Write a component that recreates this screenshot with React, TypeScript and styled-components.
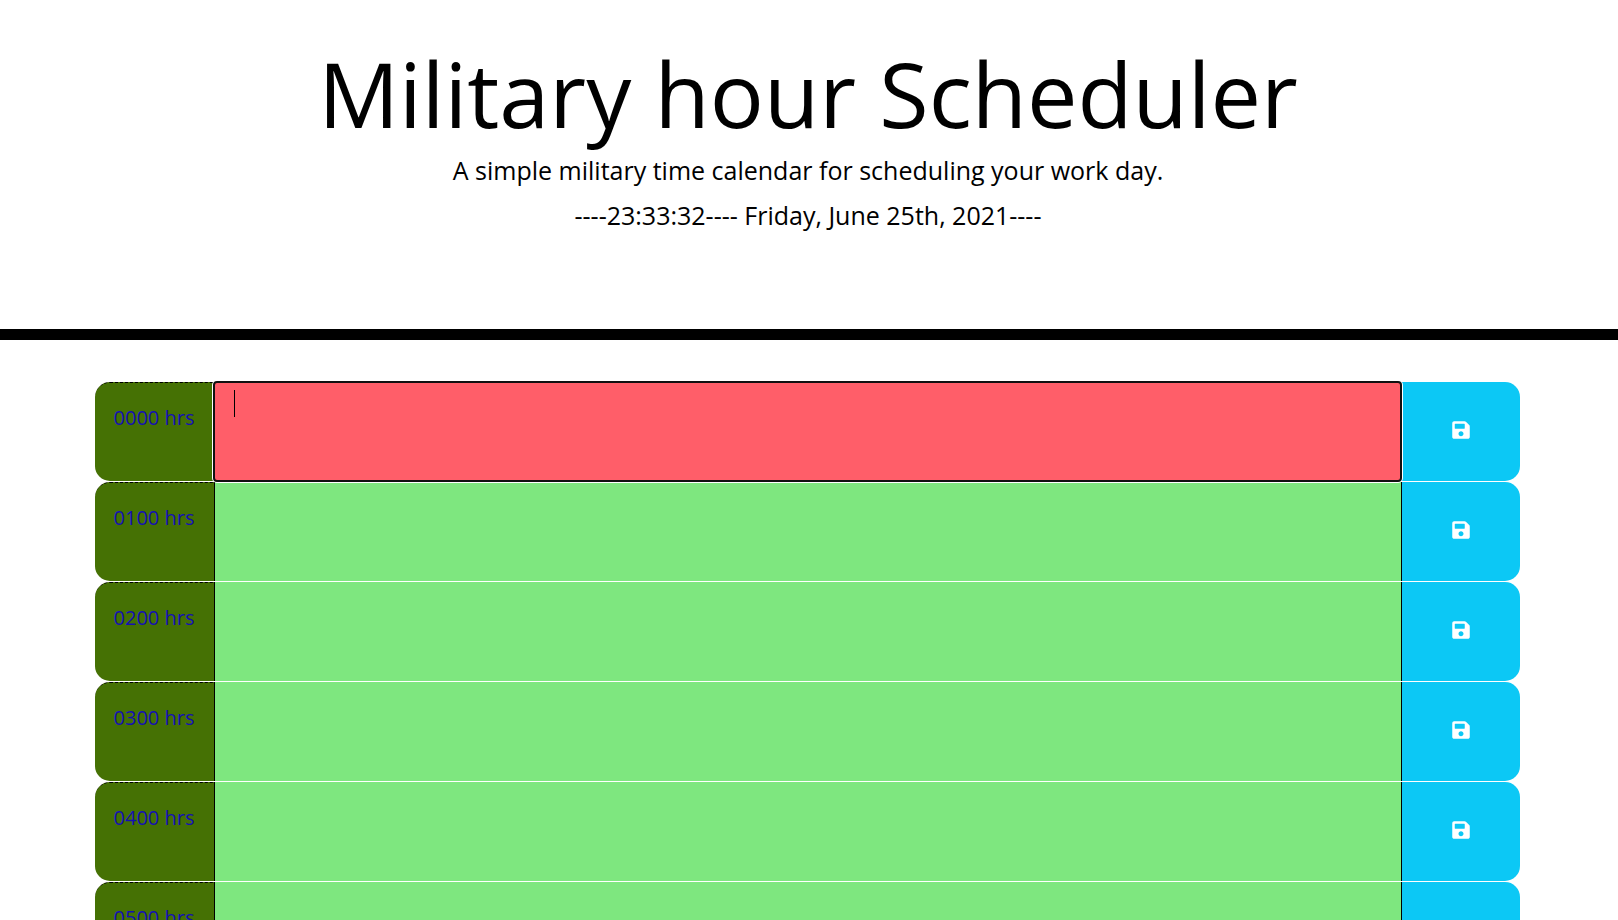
import { createGlobalStyle } from "styled-components";
import styled from "styled-components";
import { FaSave } from "react-icons/fa";

const hours = Array.from({ length: 24 }, (_, i) => i);

const App = () => {
  return (
    <>
      <GlobalStyle />
      <Header>
        <Title>Military hour Scheduler</Title>
        <Lead>A simple military time calendar for scheduling your work day.</Lead>
        <Lead>----23:33:32---- Friday, June 25th, 2021----</Lead>
      </Header>
      <Planner>
        {hours.map((hour) => (
          <Row key={hour}>
            <Hour>{String(hour).padStart(2, "0")}00 hrs</Hour>
            <Entry current={hour === 0}>{hour === 0 && <Caret />}</Entry>
            <SaveButton aria-label="Save">
              <FaSave />
            </SaveButton>
          </Row>
        ))}
      </Planner>
    </>
  );
};

const GlobalStyle = createGlobalStyle`
  html, body {
    margin: 0;
    height: 100%;
    overflow: hidden;
    background: #fff;
    font-family: "Open Sans", sans-serif;
    color: #000;
  }
`;

const Header = styled.header`
  height: 340px;
  padding: 46px 2px 0 0;
  box-sizing: border-box;
  border-bottom: 11px solid #000;
  text-align: center;
`;

const Title = styled.h1`
  margin: 0 0 12px;
  font-size: 90px;
  font-weight: 400;
  line-height: 94px;
`;

const Lead = styled.p`
  margin: 0 0 9px;
  font-size: 25px;
  font-weight: 400;
  line-height: 36px;
`;

const Planner = styled.main`
  width: 1425px;
  margin: 42px 0 0 95px;
`;

const Row = styled.div`
  display: grid;
  grid-template-columns: 120px 1fr 119px;
  height: 100px;
`;

const Hour = styled.div`
  box-sizing: border-box;
  height: 99px;
  padding: 20px 1px 0 0;
  background: #457104;
  border-top: 1px dashed #000;
  border-right: 1px solid #000;
  border-radius: 15px 0 0 15px;
  color: #1410b4;
  font-size: 20px;
  line-height: 30px;
  text-align: center;
`;

const Entry = styled.div<{ current: boolean }>`
  position: relative;
  z-index: ${({ current }) => (current ? 1 : 0)};
  box-sizing: border-box;
  height: ${({ current }) => (current ? "101px" : "99px")};
  margin: ${({ current }) => (current ? "-1px -1px 0 -2px" : "0")};
  background: ${({ current }) => (current ? "#ff5e69" : "#7ee77f")};
  border: ${({ current }) => (current ? "2px solid #111" : "none")};
  border-radius: ${({ current }) => (current ? "4px" : "0")};
  box-shadow: ${({ current }) => (current ? "0 0 0 1px #fff" : "none")};
`;

const Caret = styled.span`
  position: absolute;
  top: 7px;
  left: 19px;
  width: 1px;
  height: 27px;
  background: #000;
`;

const SaveButton = styled.button`
  display: flex;
  align-items: center;
  justify-content: center;
  height: 99px;
  padding: 0 0 3px;
  border: none;
  border-left: 1px solid #000;
  border-radius: 0 15px 15px 0;
  background: #0cc8f5;
  color: #fff;
  font-size: 20px;
`;

export default App;
